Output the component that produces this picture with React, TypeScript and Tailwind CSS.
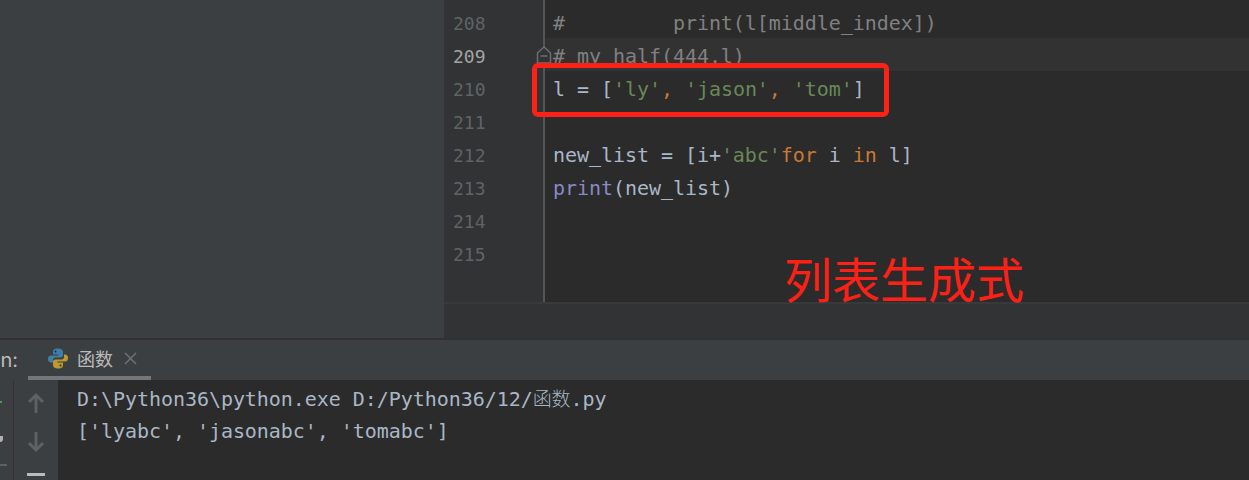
const MONO = "font-['DejaVu_Sans_Mono','Noto_Sans_CJK_SC',monospace]";

const GUTTER = [208, 209, 210, 211, 212, 213, 214, 215];

function PythonIcon() {
  return (
    <svg width="22" height="23" viewBox="0 0 22 22">
      <path d="M11 1c-4 0-5 1.500-5 3.500V7h5.500v1H4C2 8 1 9.500 1 11.500S2 15 4 15h2v-2.500C6 11 7 10 8.500 10h5C15 10 16 9 16 7.500v-3C16 2.500 14.500 1 11 1z" fill="#3d7fa8" />
      <path d="M11 21c4 0 5-1.500 5-3.500V15h-5.500v-1H18c2 0 3-1.500 3-3.500S20 7 18 7h-1v2.500c0 1.500-1 2.500-2.500 2.500h-6C7 12 6 13 6 14.500v3C6 19.500 7.500 21 11 21z" fill="#bd9a30" />
      <circle cx="8.500" cy="4" r="1" fill="#2b2b2b" />
      <circle cx="13.500" cy="18" r="1" fill="#2b2b2b" />
    </svg>
  );
}

function ArrowIcon({ up }: { up?: boolean }) {
  return (
    <svg width="18" height="20" viewBox="0 0 18 20" fill="none" stroke="#5d6163" strokeWidth="3">
      {up ? <path d="M9 20V2M2 9l7-7 7 7" /> : <path d="M9 0v18M2 11l7 7 7-7" />}
    </svg>
  );
}

function Code({ children, className = "" }: { children?: React.ReactNode; className?: string }) {
  return <div className={`h-[33px] leading-[37px] whitespace-pre ${className}`}>{children}</div>;
}

export default function App() {
  return (
    <div className={`w-[1249px] h-[480px] overflow-hidden flex flex-col bg-[#3c3f41] text-[20px] ${MONO}`}>
      {/* top: project panel + editor */}
      <div className="h-[338px] flex">
        <div className="w-[444px] bg-[#3c3f41]" />
        <div className="flex-1 flex flex-col bg-[#2b2b2b]">
          <div className="h-[302px] flex relative">
            <div className="w-[101px] bg-[#313335] border-r-2 border-[#555555] pt-[5px]">
              {GUTTER.map(n => (
                <div key={n} className={`h-[33px] leading-[37px] pl-[9px] text-[18px] ${n === 209 ? "text-[#a4a3a3]" : "text-[#606366]"}`}>
                  {n}
                </div>
              ))}
            </div>
            <div className="flex-1 pt-[5px] pl-[8px] text-[#a9b7c6] tracking-[-0.05px]">
              <Code className="text-[#808080]">{"#         print(l[middle_index])"}</Code>
              <Code className="text-[#808080] bg-[#323232] -ml-[8px] pl-[8px]">{"# my_half(444,l)"}</Code>
              <Code>
                {"l = ["}<span className="text-[#6a8759]">'ly'</span><span className="text-[#cc7832]">, </span>
                <span className="text-[#6a8759]">'jason'</span><span className="text-[#cc7832]">, </span>
                <span className="text-[#6a8759]">'tom'</span>]
              </Code>
              <Code />
              <Code>
                {"new_list = [i+"}<span className="text-[#6a8759]">'abc'</span><span className="text-[#cc7832]">for</span>
                {" i "}<span className="text-[#cc7832]">in</span>{" l]"}
              </Code>
              <Code><span className="text-[#8888c6]">print</span>(new_list)</Code>
            </div>
            {/* fold marker */}
            <svg className="absolute left-[92px] top-[46px]" width="16" height="18" viewBox="0 0 16 18" fill="#313335" stroke="#6b6e70" strokeWidth="1.500">
              <path d="M1.500 17V7L8 1l6.500 6v10z" />
              <path d="M4.500 10h7" />
            </svg>
            {/* red annotation box */}
            <div className="absolute left-[88px] top-[63px] w-[357px] h-[54px] border-[5px] border-[#ff2116] rounded-[6px]" />
            {/* annotation text */}
            <div className="absolute left-[340px] top-[253px] text-[48px] leading-[48px] whitespace-nowrap text-[#ff2116] font-['Noto_Sans_CJK_SC',sans-serif]">
              列表生成式
            </div>
          </div>
          <div className="flex-1 bg-[#313335] border-t-2 border-[#38393b]" />
        </div>
      </div>

      {/* run tool window */}
      <div className="flex-1 flex flex-col border-t-[2px] border-[#2f3133]">
        <div className="h-[40px] flex items-stretch text-[#bbbbbb] bg-[#3c3f41]">
          <div className="w-[28px] pr-[10px] overflow-hidden flex items-center justify-end text-[20px] font-['Inter',sans-serif]">
            <span className="whitespace-nowrap">un:</span>
          </div>
          <div className="w-[123px] flex items-center border-b-[4px] border-[#73777a] pl-[19px] gap-[8px]">
            <PythonIcon />
            <span className="text-[18px] font-['Noto_Sans_CJK_SC',sans-serif]">函数</span>
            <svg className="ml-[3px]" width="13" height="13" viewBox="0 0 13 13" fill="none" stroke="#6e7173" strokeWidth="1.500">
              <path d="M1 1l11 11M12 1L1 12" />
            </svg>
          </div>
        </div>
        <div className="flex-1 flex">
          <div className="w-[14px] border-r border-[#323232] flex flex-col items-start">
            <div className="w-[2px] h-[2px] mt-[21px] bg-[#499c54]" />
            <div className="w-[3px] h-[6px] mt-[33px] bg-[#afb1b3] rounded-br-[3px]" />
            <div className="w-[7px] h-[2px] mt-[22px] bg-[#5d6163]" />
          </div>
          <div className="w-[44px] flex flex-col items-center gap-[19px] pt-[13px]">
            <ArrowIcon up />
            <ArrowIcon />
            <div className="w-[18px] h-[3px] mt-[2px] shrink-0 bg-[#bbbbbb]" />
          </div>
          <div className="flex-1 bg-[#2b2b2b] pl-[19px] text-[#a9b7c6] tracking-[-0.05px]">
            <div className="h-[33px] leading-[36px] whitespace-pre">
              {"D:\\Python36\\python.exe D:/Python36/12/"}<span className="font-['Noto_Sans_CJK_SC',sans-serif] font-light text-[19px]">函数</span>.py
            </div>
            <div className="h-[33px] leading-[36px] whitespace-pre">{"['lyabc', 'jasonabc', 'tomabc']"}</div>
          </div>
        </div>
      </div>
    </div>
  );
}
